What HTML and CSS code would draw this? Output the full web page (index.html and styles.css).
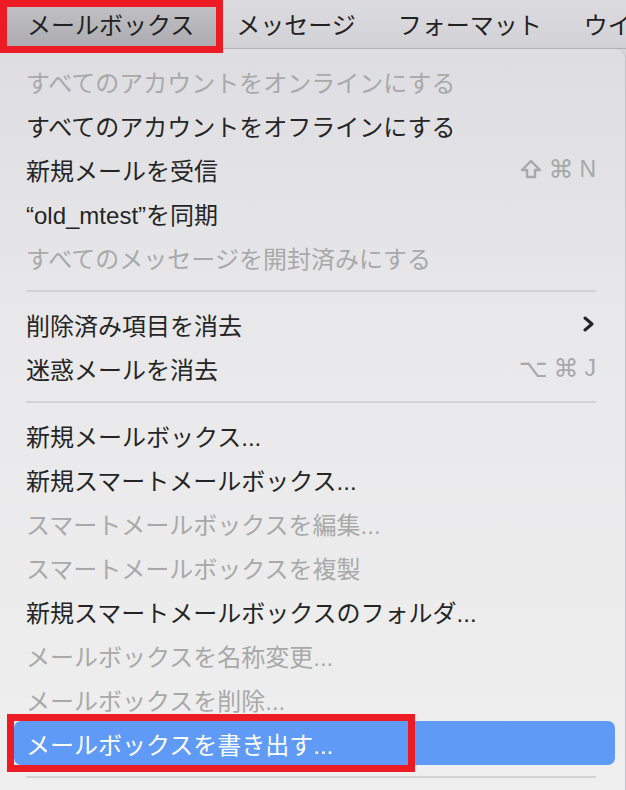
FILE: index.html
```html
<!DOCTYPE html>
<html lang="ja">
<head>
    <meta charset="UTF-8">
    <meta name="viewport" content="width=device-width, initial-scale=1.0">
    <title>メールボックス</title>
    <link rel="stylesheet" href="styles.css">
</head>
<body>

<!-- barre de menus -->
<div class="menubar">
    <div class="menubarItem active">メールボックス</div>
    <div class="menubarItem">メッセージ</div>
    <div class="menubarItem">フォーマット</div>
    <div class="menubarItem">ウインドウ</div>
</div>

<!-- menu déroulant -->
<div class="menu">
    <div class="item disabled"><span>すべてのアカウントをオンラインにする</span></div>
    <div class="item"><span>すべてのアカウントをオフラインにする</span></div>
    <div class="item"><span>新規メールを受信</span>
        <span class="keys">
            <svg width="22" height="20" viewBox="0 0 22 20"><path d="M11 2 L20 11 H15 V18 H7 V11 H2 Z" fill="none" stroke="#a8a8a8" stroke-width="2.4" stroke-linejoin="round"/></svg>
            <span class="sym">⌘</span>N
        </span>
    </div>
    <div class="item"><span>“old_mtest”を同期</span></div>
    <div class="item disabled"><span>すべてのメッセージを開封済みにする</span></div>
    <div class="sep"></div>
    <div class="item"><span>削除済み項目を消去</span>
        <svg class="chevron" width="12" height="16" viewBox="0 0 12 16"><polyline points="2,2 9,8 2,14" fill="none" stroke="#232323" stroke-width="3" stroke-linecap="round" stroke-linejoin="round"/></svg>
    </div>
    <div class="item"><span>迷惑メールを消去</span><span class="keys"><span class="sym">⌥</span><span class="sym">⌘</span>J</span></div>
    <div class="sep"></div>
    <div class="item"><span>新規メールボックス...</span></div>
    <div class="item"><span>新規スマートメールボックス...</span></div>
    <div class="item disabled"><span>スマートメールボックスを編集...</span></div>
    <div class="item disabled"><span>スマートメールボックスを複製</span></div>
    <div class="item"><span>新規スマートメールボックスのフォルダ...</span></div>
    <div class="item disabled"><span>メールボックスを名称変更...</span></div>
    <div class="item disabled"><span>メールボックスを削除...</span></div>
    <div class="item selected"><span>メールボックスを書き出す...</span><span class="mark"></span></div>
    <div class="sep"></div>
</div>

</body>
</html>
```

FILE: styles.css
```css
body {
    margin: 0;
    background-color: #d6d6da;
    font-family: "Liberation Sans", "Noto Sans CJK JP", sans-serif;
    font-size: 24px;
    color: #252525;
    overflow: hidden;
}

/* barre de menus */
.menubar {
    display: flex;
    height: 48px;
    padding-left: 7px;
    background: linear-gradient(#dcdce0, #d2d2d6);
    border-bottom: 1px solid #b4b4b8;
}

.menubarItem {
    display: flex;
    align-items: center;
    height: 46px;
    padding: 0 22px 0 20px;
    white-space: nowrap;
    color: #222;
}

/* l'élément actif laisse la place au cadre rouge en haut */
.menubarItem.active {
    position: relative;
    z-index: 1;
    margin-top: 7px;
    height: 33px;
    padding-bottom: 6px;
    background: linear-gradient(#c0c0c4, #adadb1);
    outline: 7px solid #ed1c24;
}

/* menu */
.menu {
    width: 625px;
    padding-top: 10px;
    background: linear-gradient(#dedee2, #e9e9eb 40%, #efefef);
    border-top-right-radius: 10px;
    border-right: 1px solid #c4c4c6;
    min-height: 740px;
}

.item {
    position: relative;
    display: flex;
    align-items: center;
    justify-content: space-between;
    height: 44px;
    margin: 0 10px 0 14px;
    padding: 0 19px 0 12px;
    border-radius: 7px;
    white-space: nowrap;
}

.item.disabled {
    color: #a9a9a9;
}

.item.selected {
    background-color: #5f9bf6;
    color: #fff;
}

/* cadre rouge d'annotation */
.mark {
    position: absolute;
    left: 0;
    top: 0;
    width: 394px;
    height: 44px;
    outline: 7px solid #ed1c24;
}

.keys {
    display: flex;
    align-items: center;
    gap: 6px;
    font-size: 23px;
    color: #a8a8a8;
}

.sym {
    font-family: "DejaVu Sans", sans-serif;
    font-size: 25px;
}

.chevron {
    margin-right: 1px;
}

.sep {
    display: flex;
    align-items: center;
    height: 23px;
    margin: 0 29px 0 26px;
}

.sep::before {
    content: "";
    flex: 1;
    height: 2px;
    background-color: #d3d3d5;
}
```
